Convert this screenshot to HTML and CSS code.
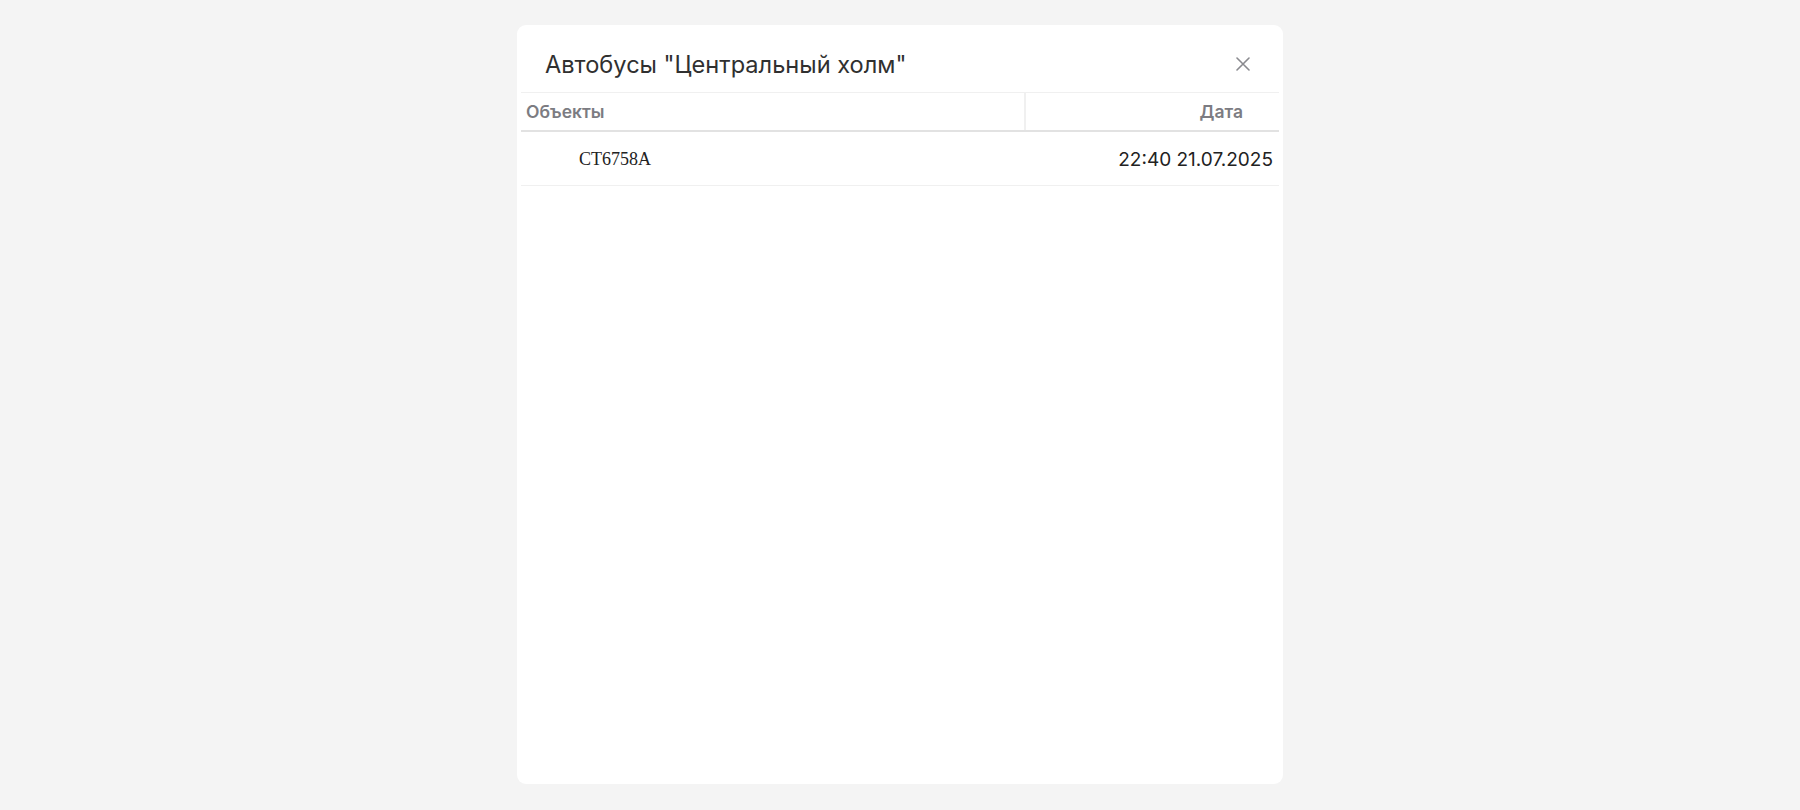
FILE: index.html
```html
<!DOCTYPE html>
<html lang="ru">
<head>
  <meta charset="UTF-8">
  <meta name="viewport" content="width=device-width, initial-scale=1.0">
  <title>Автобусы</title>
  <link rel="stylesheet" href="styles.css">
</head>
<body>

  <div class="modal">
    <div class="modal-header">
      <h2 class="modal-title">Автобусы "Центральный холм"</h2>
      <button class="close-btn" type="button" aria-label="Закрыть">
        <svg width="14" height="14" viewBox="0 0 14 14">
          <path d="M1 1 L13 13 M13 1 L1 13" stroke="#8a8a8f" stroke-width="1.6" stroke-linecap="round"/>
        </svg>
      </button>
    </div>

    <table class="objects">
      <thead>
        <tr>
          <th class="col-name">Объекты</th>
          <th class="col-date">Дата</th>
        </tr>
      </thead>
      <tbody>
        <tr>
          <td class="cell-name">CT6758A</td>
          <td class="cell-date">22:40 21.07.2025</td>
        </tr>
      </tbody>
    </table>
  </div>

</body>
</html>
```

FILE: styles.css
```css
body {
  margin: 0;
  padding: 25px 0 0;
  background-color: #f4f4f4;
  font-family: Inter, "Noto Sans", sans-serif;
}

.modal {
  width: 766px;
  height: 759px;
  margin: 0 auto 0 517px;
  background-color: #fff;
  border-radius: 9px;
  padding: 0 4px;
  box-sizing: border-box;
}

.modal-header {
  display: flex;
  align-items: center;
  justify-content: space-between;
  height: 67px;
  padding: 0 29px 0 24px;
  border-bottom: 1px solid #f0f0f0;
}

.modal-title {
  margin: 0;
  padding-top: 12px;
  font-size: 23.6px;
  font-weight: 400;
  color: #303030;
}

.close-btn {
  border: 0;
  background: none;
  padding: 0;
  margin-top: 10px;
  width: 14px;
  height: 14px;
  cursor: pointer;
}

.objects {
  width: 100%;
  border-collapse: collapse;
}

.objects th {
  height: 37px;
  padding: 0 5px;
  font-size: 17.5px;
  font-weight: 600;
  color: #7c7c82;
  border-bottom: 2px solid #e2e2e2;
}

.col-name {
  text-align: left;
  border-right: 2px solid #f0f0f0;
}

.col-date {
  width: 212px;
  text-align: right;
  padding-right: 36px !important;
}

.objects td {
  height: 50px;
  padding-top: 2px;
  border-bottom: 1px solid #f0f0f0;
}

.cell-name {
  padding-left: 58px;
  font-family: "Liberation Serif", serif;
  font-size: 18px;
  color: #222;
}

.cell-date {
  text-align: right;
  padding-right: 6px;
  font-size: 19px;
  color: #222;
}
```
